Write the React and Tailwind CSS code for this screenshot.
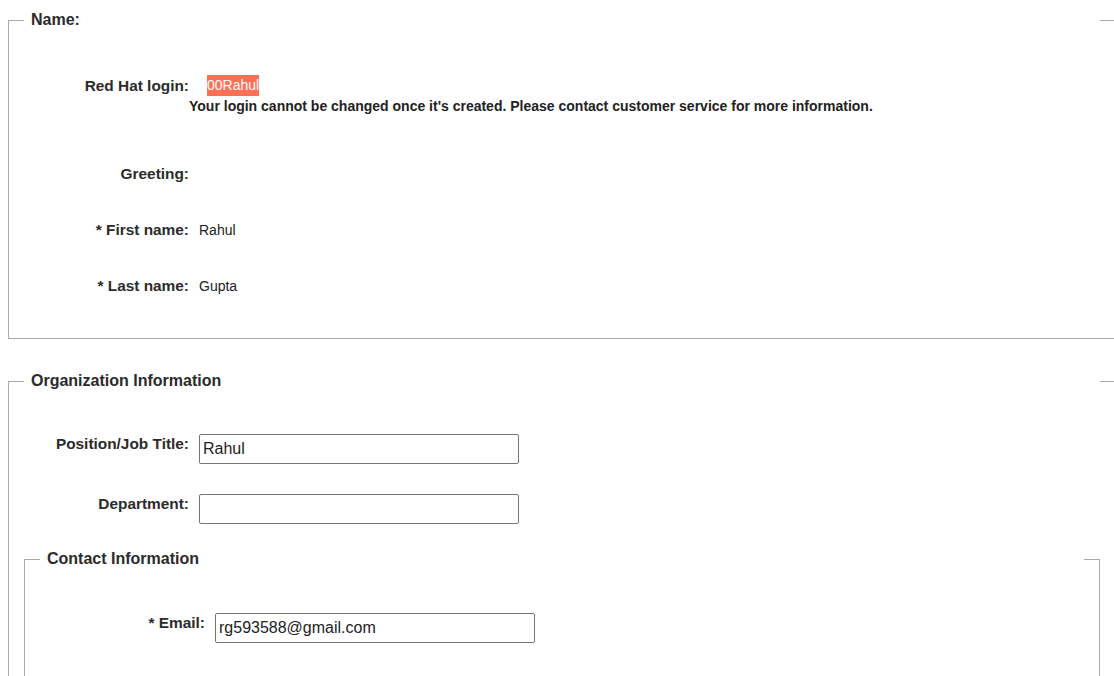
import React from 'react';

const font = "font-['Liberation_Sans',Arial,sans-serif]";

const Label = ({ children }) => (
  <div className="w-[165px] shrink-0 text-right font-bold text-[15.4px] leading-[20px] text-[#2b2b2b]">{children}</div>
);

const TextRow = ({ label, value, className = '' }) => (
  <div className={`flex items-start ${className}`}>
    <Label>{label}</Label>
    <div className="ml-[10px] text-[14px] leading-[18px] text-[#222] pt-[1px]">{value}</div>
  </div>
);

const InputRow = ({ label, value, className = '' }) => (
  <div className={`flex items-start ${className}`}>
    <Label>{label}</Label>
    <input
      type="text"
      defaultValue={value}
      className="ml-[10px] w-[320px] h-[30px] border border-[#767676] rounded-[2px] px-[3px] text-[16px] text-[#222] bg-white outline-none"
    />
  </div>
);

const Fieldset = ({ title, className = '', children }) => (
  <fieldset className={`border border-[#aaa] px-[15px] min-w-0 ${className}`}>
    <legend className="w-full px-[7px] text-[16px] leading-[20px] font-bold text-[#2b2b2b]">{title}</legend>
    {children}
  </fieldset>
);

export default function App() {
  return (
    <div className={`${font} bg-white h-[676px] overflow-hidden pl-2 pt-[10px]`}>
      <div className="w-[1108px]">
        <Fieldset title="Name:" className="pb-[42px]">
          <div className="mt-[45px] flex items-start">
            <Label>
              <span className="inline-block pt-[1px]">Red Hat login:</span>
            </Label>
            <span className="ml-[18px] bg-[#ff6f56] text-white text-[14px] leading-[21px]">00Rahul</span>
          </div>
          <div className="ml-[165px] mt-[2px] font-bold text-[14px] leading-[16px] text-[#222]">
            Your login cannot be changed once it's created. Please contact customer service for more information.
          </div>
          <TextRow label="Greeting:" value="" className="mt-[50px]" />
          <TextRow label="* First name:" value="Rahul" className="mt-[36px]" />
          <TextRow label="* Last name:" value="Gupta" className="mt-[36px]" />
        </Fieldset>

        <Fieldset title="Organization Information" className="mt-[32px] pb-[200px]">
          <InputRow label="Position/Job Title:" value="Rahul" className="mt-[43px]" />
          <InputRow label="Department:" value="" className="mt-[30px]" />

          <Fieldset title="Contact Information" className="mt-[25px] pb-[200px]">
            <InputRow label="* Email:" value="rg593588@gmail.com" className="mt-[44px]" />
          </Fieldset>
        </Fieldset>
      </div>
    </div>
  );
}
